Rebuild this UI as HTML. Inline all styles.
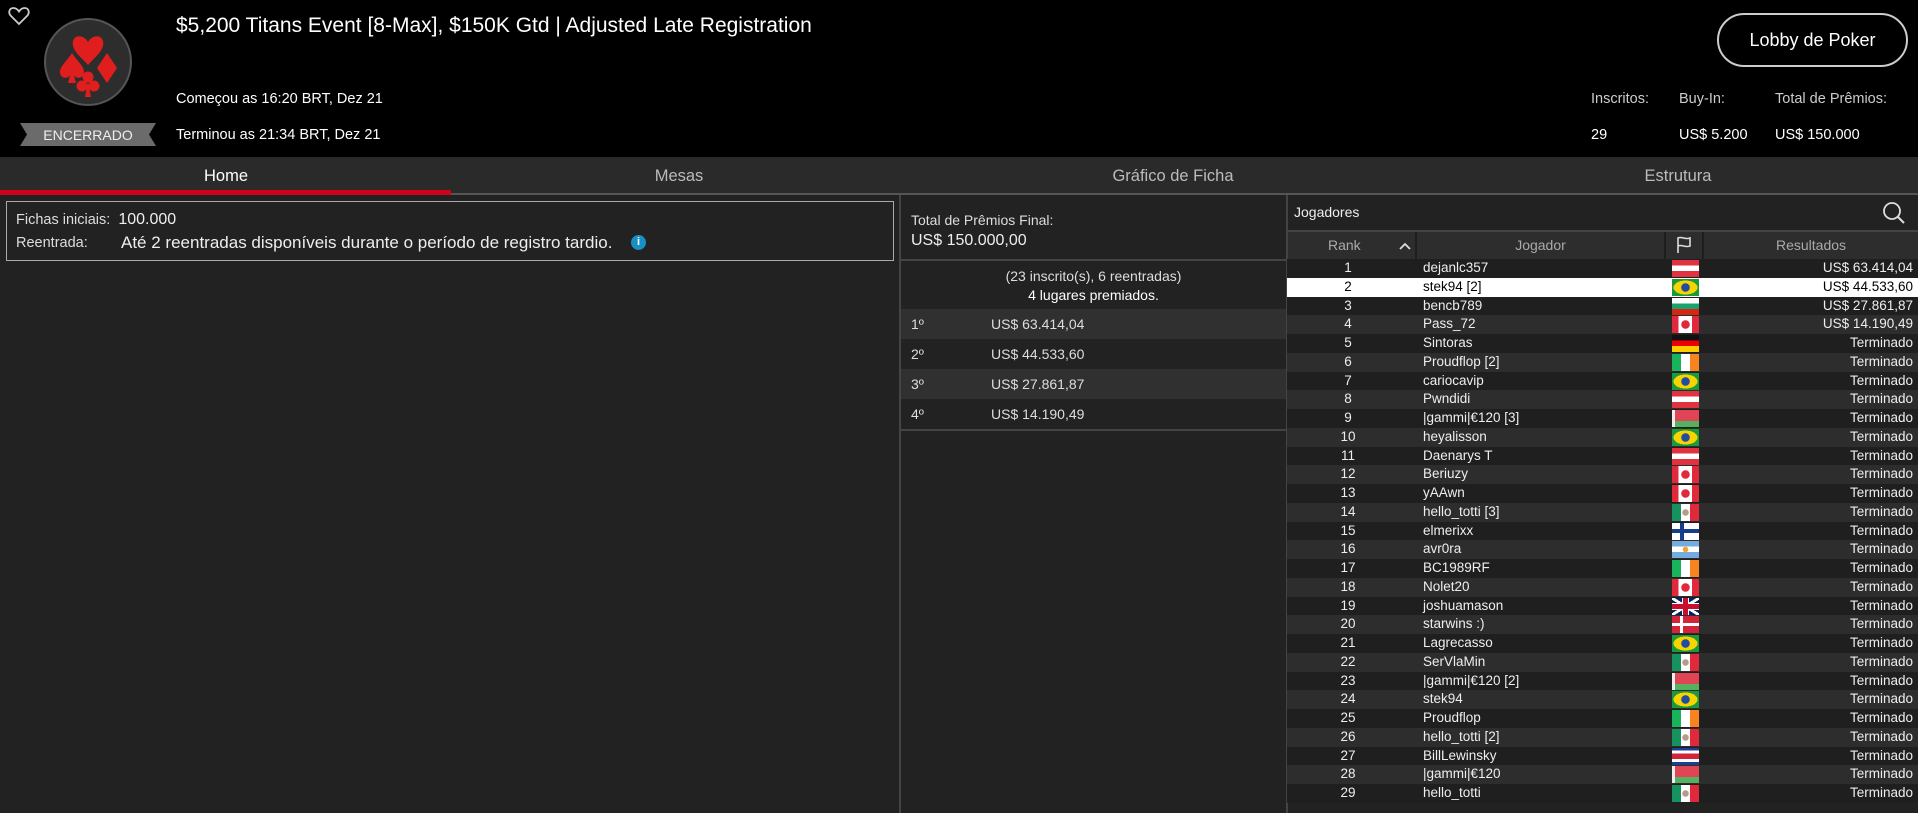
<!DOCTYPE html><html><head><meta charset="utf-8"><style>
*{margin:0;padding:0;box-sizing:border-box}
body{width:1918px;height:813px;background:#222;font-family:"Liberation Sans",sans-serif;color:#ddd;position:relative;overflow:hidden}
.a{position:absolute;white-space:nowrap}
#hdr{position:absolute;left:0;top:0;width:1918px;height:157px;background:#000}
#tabs{position:absolute;left:0;top:157px;width:1918px;height:38px;background:#2a2a2a;border-bottom:2px solid #555}
.tab{position:absolute;top:167px;font-size:16.5px;color:#bbb;transform:translateX(-50%);white-space:nowrap}
.row{position:absolute;left:1287px;width:631px;height:18.75px;font-size:13.5px;line-height:18.75px;color:#eee}
.row span{position:absolute}
.fl{position:absolute;left:385px;top:1px;width:27px;height:17px}
.AT{background:linear-gradient(#e0323f 33%,#fff 33% 66%,#e0323f 66%)}
.BG{background:linear-gradient(#fff 33%,#19a26e 33% 66%,#d62612 66%)}
.DE{background:linear-gradient(#111 33%,#e00 33% 66%,#fc0 66%)}
.IE{background:linear-gradient(90deg,#19b35b 33%,#fff 33% 66%,#f88420 66%)}
.MX{background:radial-gradient(circle,#b98 0 3px,transparent 3.5px),linear-gradient(90deg,#16925e 33%,#fff 33% 66%,#e02a3c 66%)}
.CA{background:radial-gradient(circle,#e02a3c 0 4px,transparent 4.5px),linear-gradient(90deg,#e02a3c 25%,#fff 25% 75%,#e02a3c 75%)}
.BR{background:radial-gradient(circle,#234ba0 0 4px,transparent 4.5px),radial-gradient(ellipse 12px 7px,#f5d400 0 100%,transparent 100%),#1a9a3c}
.BY{background:linear-gradient(90deg,#eee 3px,transparent 3px),linear-gradient(#e04455 66%,#55b060 66%)}
.FI{background:linear-gradient(90deg,transparent 8px,#163d8d 8px 12px,transparent 12px),linear-gradient(#fff 6px,#163d8d 6px 10px,#fff 10px)}
.AR{background:radial-gradient(circle,#f3a529 0 2.5px,transparent 3px),linear-gradient(#74acdf 33%,#fff 33% 66%,#74acdf 66%)}
.DK{background:linear-gradient(90deg,transparent 8px,#fff 8px 11px,transparent 11px),linear-gradient(#d3253a 7px,#fff 7px 10px,#d3253a 10px)}
.CR{background:linear-gradient(#1c3f94 16%,#fff 16% 33%,#d3253a 33% 66%,#fff 66% 83%,#1c3f94 83%)}
.GB{background:linear-gradient(90deg,transparent 11px,#c8102e 11px 16px,transparent 16px),linear-gradient(transparent 6px,#c8102e 6px 11px,transparent 11px),linear-gradient(90deg,transparent 10px,#fff 10px 17px,transparent 17px),linear-gradient(transparent 5px,#fff 5px 12px,transparent 12px),linear-gradient(32deg,transparent 45%,#fff 45% 55%,transparent 55%),linear-gradient(-32deg,transparent 45%,#fff 45% 55%,transparent 55%),#012169}
</style></head><body>
<div id="hdr"></div>
<svg class="a" style="left:8px;top:6px" width="22" height="20" viewBox="0 0 22 20"><path d="M11 18 L3 10 C0 7 1 2 5.5 2 C8 2 10 4 11 5.5 C12 4 14 2 16.5 2 C21 2 22 7 19 10 Z" fill="none" stroke="#ccc" stroke-width="1.8"/></svg>
<svg class="a" style="left:43px;top:17px" width="90" height="90" viewBox="0 0 90 90"><circle cx="45" cy="45" r="43" fill="#2d2d2d" stroke="#555" stroke-width="2"/>
<path d="M45 48 C38 40 28 33 30 24 C32 17 41 18 45 25 C49 18 58 17 60 24 C62 33 52 40 45 48Z" fill="#e01e1e"/>
<path d="M29 36 C24 44 16 50 17 56 C18 62 25 62 27 58 L25 66 L33 66 L31 58 C33 62 40 62 41 56 C42 50 34 44 29 36Z" fill="#e01e1e"/>
<path d="M64 36 L74 51 L64 66 L54 51Z" fill="#e01e1e"/>
<circle cx="45" cy="60" r="5.5" fill="#e01e1e"/><circle cx="39" cy="69" r="5.5" fill="#e01e1e"/><circle cx="51" cy="69" r="5.5" fill="#e01e1e"/><path d="M45 64 L42 80 L48 80Z" fill="#e01e1e"/></svg>
<svg class="a" style="left:20px;top:123px" width="136" height="23"><path d="M0 0 H136 L129 11.5 L136 23 H0 L7 11.5Z" fill="#6b6b6b"/></svg>
<div class="a" style="left:20px;top:127px;width:136px;text-align:center;font-size:14px;color:#eee">ENCERRADO</div>
<div class="a" style="left:176px;top:14px;font-size:21px;color:#fff">$5,200 Titans Event [8-Max], $150K Gtd | Adjusted Late Registration</div>
<div class="a" style="left:176px;top:91px;font-size:14.5px;color:#fff">Começou as 16:20 BRT, Dez 21</div>
<div class="a" style="left:176px;top:127px;font-size:14.5px;color:#fff">Terminou as 21:34 BRT, Dez 21</div>
<div class="a" style="left:1717px;top:13px;width:191px;height:54px;border:2px solid #ccc;border-radius:27px;text-align:center;line-height:50px;font-size:18px;color:#fff">Lobby de Poker</div>
<div class="a" style="left:1591px;top:91px;font-size:14.5px;color:#ccc">Inscritos:</div>
<div class="a" style="left:1679px;top:91px;font-size:14.5px;color:#ccc">Buy-In:</div>
<div class="a" style="left:1775px;top:91px;font-size:14.5px;color:#ccc">Total de Prêmios:</div>
<div class="a" style="left:1591px;top:127px;font-size:14.5px;color:#fff">29</div>
<div class="a" style="left:1679px;top:127px;font-size:14.5px;color:#fff">US$ 5.200</div>
<div class="a" style="left:1775px;top:127px;font-size:14.5px;color:#fff">US$ 150.000</div>
<div id="tabs"></div>
<div class="tab" style="left:226px;color:#fff">Home</div>
<div class="tab" style="left:679px">Mesas</div>
<div class="tab" style="left:1173px">Gráfico de Ficha</div>
<div class="tab" style="left:1678px">Estrutura</div>
<div class="a" style="left:0;top:190px;width:451px;height:5px;background:#d0021b"></div>
<div class="a" style="left:6px;top:201px;width:888px;height:60px;border:1.5px solid #aaa"></div>
<div class="a" style="left:16px;top:211px;font-size:14.5px;color:#ddd">Fichas iniciais:&nbsp; <span style="font-size:16px;color:#eee">100.000</span></div>
<div class="a" style="left:16px;top:235px;font-size:14.5px;color:#ddd">Reentrada:</div>
<div class="a" style="left:121px;top:233px;font-size:17px;color:#eee">Até 2 reentradas disponíveis durante o período de registro tardio.</div>
<div class="a" style="left:631px;top:235px;width:15px;height:15px;border-radius:50%;background:#1a8fc4;color:#fff;font-size:11px;font-weight:bold;text-align:center;line-height:15px">i</div>
<div class="a" style="left:899px;top:195px;width:2px;height:618px;background:#444"></div>
<div class="a" style="left:1286px;top:195px;width:2px;height:618px;background:#444"></div>
<div class="a" style="left:901px;top:259px;width:385px;height:2px;background:#444"></div>
<div class="a" style="left:911px;top:212px;font-size:14px;color:#ddd">Total de Prêmios Final:</div>
<div class="a" style="left:911px;top:232px;font-size:16px;color:#eee">US$ 150.000,00</div>
<div class="a" style="left:901px;top:268px;width:385px;text-align:center;font-size:14px;color:#ddd">(23 inscrito(s), 6 reentradas)</div>
<div class="a" style="left:901px;top:287px;width:385px;text-align:center;font-size:14px;color:#fff">4 lugares premiados.</div>
<div class="a" style="left:901px;top:309px;width:385px;height:30px;background:#303030"></div>
<div class="a" style="left:901px;top:369px;width:385px;height:30px;background:#303030"></div>
<div class="a" style="left:901px;top:429px;width:385px;height:2px;background:#444"></div>
<div class="a" style="left:911px;top:316px;font-size:14px">1º</div><div class="a" style="left:991px;top:316px;font-size:14px">US$ 63.414,04</div>
<div class="a" style="left:911px;top:346px;font-size:14px">2º</div><div class="a" style="left:991px;top:346px;font-size:14px">US$ 44.533,60</div>
<div class="a" style="left:911px;top:376px;font-size:14px">3º</div><div class="a" style="left:991px;top:376px;font-size:14px">US$ 27.861,87</div>
<div class="a" style="left:911px;top:406px;font-size:14px">4º</div><div class="a" style="left:991px;top:406px;font-size:14px">US$ 14.190,49</div>
<div class="a" style="left:1294px;top:204px;font-size:14px;color:#eee">Jogadores</div>
<svg class="a" style="left:1881px;top:200px" width="26" height="26" viewBox="0 0 26 26"><circle cx="11" cy="11" r="8" fill="none" stroke="#ddd" stroke-width="1.8"/><path d="M17 17 L23 23" stroke="#ddd" stroke-width="2"/></svg>
<div class="a" style="left:1288px;top:230px;width:630px;height:2px;background:#444"></div>
<div class="a" style="left:1288px;top:232px;width:630px;height:27px;background:#2d2d2d"></div>
<div class="a" style="left:1415px;top:232px;width:2px;height:27px;background:#1e1e1e"></div>
<div class="a" style="left:1664px;top:232px;width:2px;height:27px;background:#1e1e1e"></div>
<div class="a" style="left:1702px;top:232px;width:2px;height:27px;background:#1e1e1e"></div>
<div class="a" style="left:1328px;top:237px;font-size:14px;color:#aaa">Rank</div>
<svg class="a" style="left:1399px;top:241px" width="12" height="10"><path d="M1 8 L6 3 L11 8" fill="none" stroke="#ddd" stroke-width="1.8"/></svg>
<div class="a" style="left:1416px;top:237px;width:249px;text-align:center;font-size:14px;color:#aaa">Jogador</div>
<svg class="a" style="left:1676px;top:236px" width="16" height="18"><path d="M2 17 V2 C6 0 9 4 14 2 V10 C9 12 6 8 2 10" fill="none" stroke="#ddd" stroke-width="1.6"/></svg>
<div class="a" style="left:1704px;top:237px;width:214px;text-align:center;font-size:14px;color:#aaa">Resultados</div>
<div id="rows"></div>
<script>
var d=[["dejanlc357","AT","US$ 63.414,04"],["stek94 [2]","BR","US$ 44.533,60"],["bencb789","BG","US$ 27.861,87"],["Pass_72","CA","US$ 14.190,49"],["Sintoras","DE"],["Proudflop [2]","IE"],["cariocavip","BR"],["Pwndidi","AT"],["|gammi|€120 [3]","BY"],["heyalisson","BR"],["Daenarys T","AT"],["Beriuzy","CA"],["yAAwn","CA"],["hello_totti [3]","MX"],["elmerixx","FI"],["avr0ra","AR"],["BC1989RF","IE"],["Nolet20","CA"],["joshuamason","GB"],["starwins :)","DK"],["Lagrecasso","BR"],["SerVlaMin","MX"],["|gammi|€120 [2]","BY"],["stek94","BR"],["Proudflop","IE"],["hello_totti [2]","MX"],["BillLewinsky","CR"],["|gammi|€120","BY"],["hello_totti","MX"]];
var h="";d.forEach(function(r,i){var bg=i==1?"#fff":(i%2?"#2d2d2d":"#1f1f1f"),c=i==1?"#000":"#eee";
h+='<div class="row" style="top:'+(259+i*18.75)+'px;background:'+bg+';color:'+c+'"><span style="left:0;width:122px;text-align:center">'+(i+1)+'</span><span style="left:136px">'+r[0]+'</span><div class="fl '+r[1]+'"></div><span style="right:5px">'+(r[2]||"Terminado")+'</span></div>';});
document.getElementById("rows").innerHTML=h;
</script>
</body></html>
